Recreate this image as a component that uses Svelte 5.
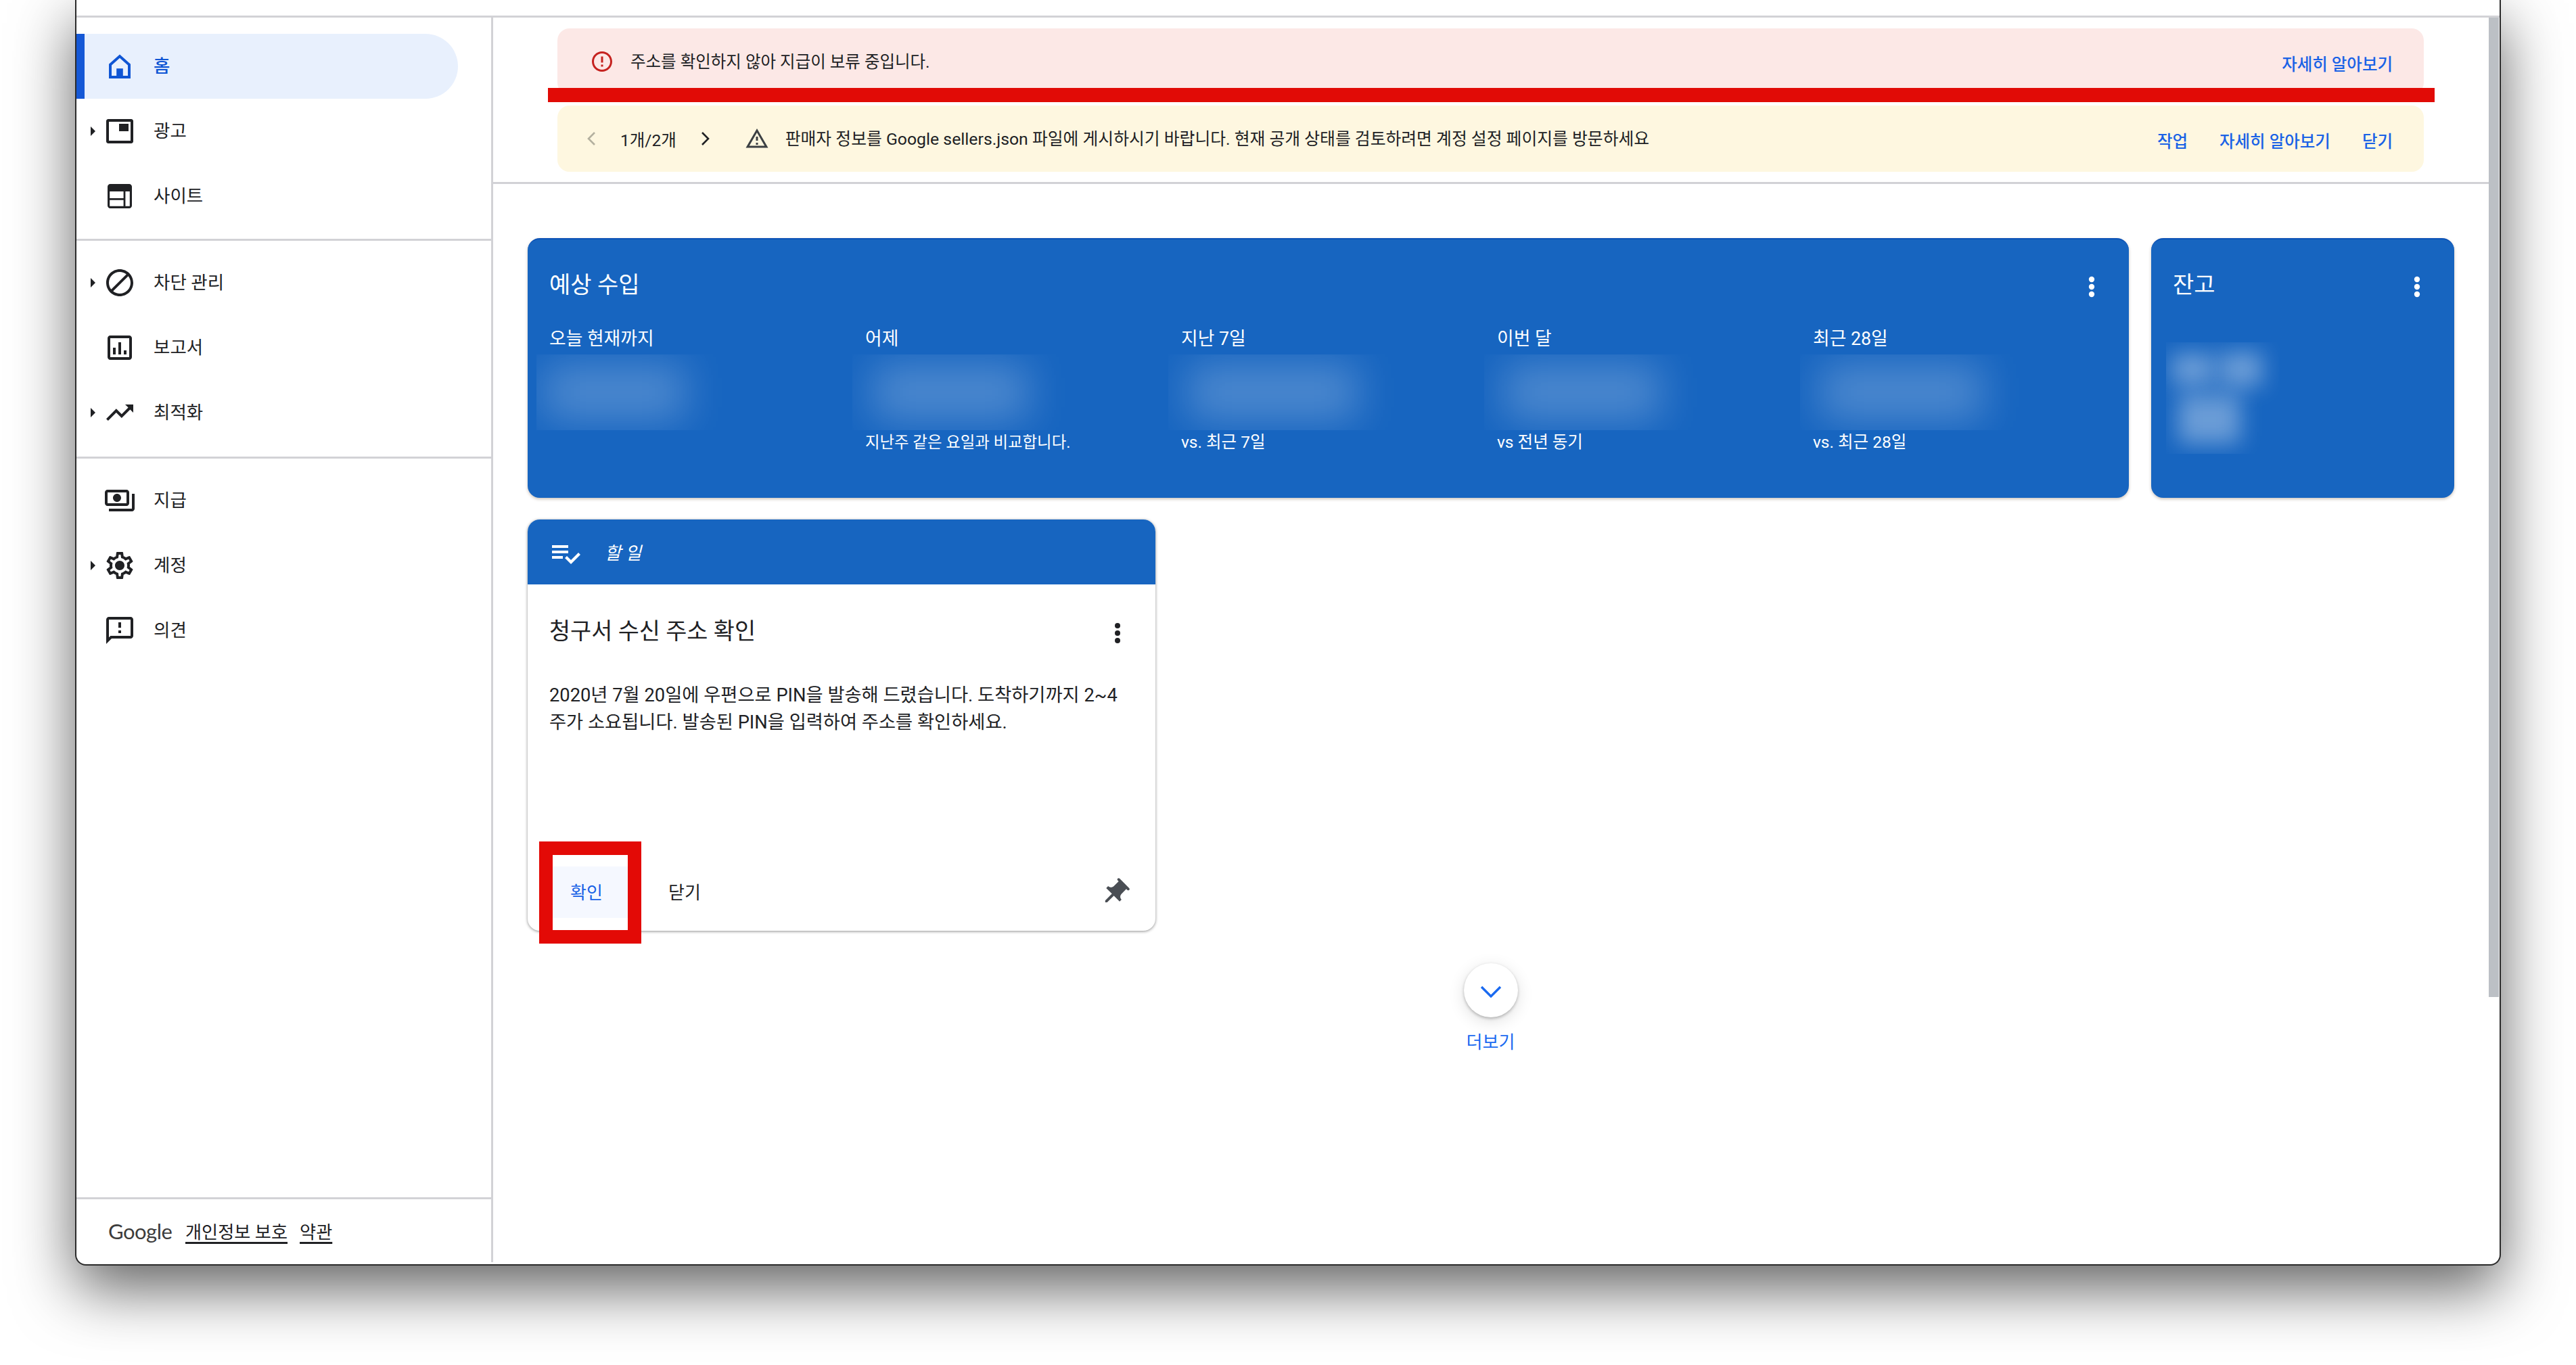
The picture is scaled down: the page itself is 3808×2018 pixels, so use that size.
<script>
  const groups = [
    [
      { label: '홈', active: true, d: 'home' },
      { label: '광고', caret: true, d: 'ads' },
      { label: '사이트', d: 'site' }
    ],
    [
      { label: '차단 관리', caret: true, d: 'block' },
      { label: '보고서', d: 'report' },
      { label: '최적화', caret: true, d: 'trend' }
    ],
    [
      { label: '지급', d: 'pay' },
      { label: '계정', caret: true, d: 'gear' },
      { label: '의견', d: 'feedback' }
    ]
  ];
  const paths = {
    home: 'M12 3.2 20 10.4V21H4V10.4L12 3.2ZM12 5.9 6 11.3V19H9.6V13.6H14.4V19H18V11.3L12 5.9Z',
    ads: 'M3.5 3H20.5C21.3 3 22 3.7 22 4.5V19.5C22 20.3 21.3 21 20.5 21H3.5C2.7 21 2 20.3 2 19.5V4.5C2 3.7 2.7 3 3.5 3ZM4 5V19H20V5H4ZM11.5 6.5H18.5V12H11.5V6.5Z',
    site: 'M5 3H19C20.1 3 21 3.9 21 5V19C21 20.1 20.1 21 19 21H5C3.9 21 3 20.1 3 19V5C3 3.9 3.9 3 5 3ZM4.6 8.5V13.5H14.8V8.5H4.6ZM16.2 8.5V19.4H19.4V8.5H16.2ZM4.6 14.9V19.4H14.8V14.9H4.6Z',
    block: 'M12 2C6.48 2 2 6.48 2 12s4.48 10 10 10 10-4.48 10-10S17.52 2 12 2zM4 12c0-4.42 3.58-8 8-8 1.85 0 3.55.63 4.9 1.69L5.69 16.9C4.63 15.55 4 13.85 4 12zm8 8c-1.85 0-3.55-.63-4.9-1.69L18.31 7.1C19.37 8.45 20 10.15 20 12c0 4.42-3.58 8-8 8z',
    report: 'M19 3H5c-1.1 0-2 .9-2 2v14c0 1.1.9 2 2 2h14c1.1 0 2-.9 2-2V5c0-1.1-.9-2-2-2zm0 16H5V5h14v14zM7 12h2v5H7zm4-4h2v9h-2zm4 6h2v3h-2z',
    trend: 'M16 6l2.29 2.29-4.88 4.88-4-4L2 16.59 3.41 18l6-6 4 4 6.3-6.29L22 12V6z',
    pay: 'M19 14V6c0-1.1-.9-2-2-2H3c-1.1 0-2 .9-2 2v8c0 1.1.9 2 2 2h14c1.1 0 2-.9 2-2zm-2 0H3V6h14v8zm-7-7c-1.66 0-3 1.34-3 3s1.34 3 3 3 3-1.34 3-3-1.34-3-3-3zm13 0v11c0 1.1-.9 2-2 2H4v-2h17V7h2z',
    gear: 'M19.43 12.98c.04-.32.07-.64.07-.98 0-.34-.03-.66-.07-.98l2.11-1.65c.19-.15.24-.42.12-.64l-2-3.46c-.09-.16-.26-.25-.44-.25-.06 0-.12.01-.17.03l-2.49 1c-.52-.4-1.08-.73-1.69-.98l-.38-2.65C14.46 2.18 14.25 2 14 2h-4c-.25 0-.46.18-.49.42l-.38 2.65c-.61.25-1.17.59-1.69.98l-2.49-1c-.06-.02-.12-.03-.18-.03-.17 0-.34.09-.43.25l-2 3.46c-.13.22-.07.49.12.64l2.11 1.65c-.04.32-.07.65-.07.98 0 .33.03.66.07.98l-2.11 1.65c-.19.15-.24.42-.12.64l2 3.46c.09.16.26.25.44.25.06 0 .12-.01.17-.03l2.49-1c.52.4 1.08.73 1.69.98l.38 2.65c.03.24.24.42.49.42h4c.25 0 .46-.18.49-.42l.38-2.65c.61-.25 1.17-.59 1.69-.98l2.49 1c.06.02.12.03.18.03.17 0 .34-.09.43-.25l2-3.46c.12-.22.07-.49-.12-.64l-2.11-1.65zm-1.98-1.71c.04.31.05.52.05.73 0 .21-.02.43-.05.73l-.14 1.13.89.7 1.08.84-.7 1.21-1.27-.51-1.04-.42-.9.68c-.43.32-.84.56-1.25.73l-1.06.43-.16 1.13-.2 1.35h-1.4l-.19-1.35-.16-1.13-1.06-.43c-.43-.18-.83-.41-1.23-.71l-.91-.7-1.06.43-1.27.51-.7-1.21 1.08-.84.89-.7-.14-1.13c-.03-.31-.05-.54-.05-.74s.02-.43.05-.73l.14-1.13-.89-.7-1.08-.84.7-1.21 1.27.51 1.04.42.9-.68c.43-.32.84-.56 1.25-.73l1.06-.43.16-1.13.2-1.35h1.39l.19 1.35.16 1.13 1.06.43c.43.18.83.41 1.23.71l.91.7 1.06-.43 1.27-.51.7 1.21-1.07.85-.89.7.14 1.13zM12 8.5c-1.93 0-3.5 1.57-3.5 3.5s1.57 3.5 3.5 3.5 3.5-1.57 3.5-3.5-1.57-3.5-3.5-3.5z',
    feedback: 'M20 2H4c-1.1 0-1.99.9-1.99 2L2 22l4-4h14c1.1 0 2-.9 2-2V4c0-1.1-.9-2-2-2zm0 14H5.17l-.59.59-.58.58V4h16v12zm-9-4h2v2h-2zm0-6h2v4h-2z'
  };
  const stats = [
    { label: '오늘 현재까지', sub: '', left: 10, width: 210 },
    { label: '어제', sub: '지난주 같은 요일과 비교합니다.', narrow: true, left: 30, width: 230 },
    { label: '지난 7일', sub: 'vs. 최근 7일', left: 30, width: 250 },
    { label: '이번 달', sub: 'vs 전년 동기', left: 30, width: 230 },
    { label: '최근 28일', sub: 'vs. 최근 28일', left: 30, width: 240 }
  ];
</script>

<div class="window">
  <div class="topbar"></div>
  <div class="body">
    <aside class="sidebar">
      <div class="nav">
        {#each groups as group, g}
          <div class="group" class:first={g === 0}>
            {#each group as item}
              <div class="item" class:active={item.active}>
                <span class="caret" class:shown={item.caret}></span>
                <svg class="nav-icon" viewBox="0 0 24 24" fill-rule={item.d === 'home' || item.d === 'ads' || item.d === 'site' ? 'evenodd' : 'nonzero'}><path d={paths[item.d]} /></svg>
                <span class="label">{item.label}</span>
              </div>
            {/each}
          </div>
        {/each}
      </div>
      <div class="foot">
        <span class="google">Google</span>
        <span class="foot-link">개인정보 보호</span>
        <span class="foot-link">약관</span>
      </div>
    </aside>

    <main class="main">
      <section class="banners">
        <div class="banner pink">
          <svg class="err" viewBox="0 0 24 24"><path d="M11 15h2v2h-2zm0-8h2v6h-2zm.99-5C6.47 2 2 6.48 2 12s4.47 10 9.99 10C17.52 22 22 17.52 22 12S17.52 2 11.99 2zM12 20c-4.42 0-8-3.58-8-8s3.58-8 8-8 8 3.58 8 8-3.58 8-8 8z" /></svg>
          <span class="msg">주소를 확인하지 않아 지급이 보류 중입니다.</span>
          <span class="links"><span class="link">자세히 알아보기</span></span>
        </div>
        <div class="banner yellow">
          <svg class="chev" viewBox="0 0 16 24"><path class="off" d="M13 3 4 12l9 9" /></svg>
          <span class="pager">1개/2개</span>
          <svg class="chev" viewBox="0 0 16 24"><path d="M3 3l9 9-9 9" /></svg>
          <svg class="warn" viewBox="0 0 24 24"><path d="M12 5.99L19.53 19H4.47L12 5.99M12 2L1 21h22L12 2zm1 14h-2v2h2v-2zm0-6h-2v4h2v-4z" /></svg>
          <span class="msg long">판매자 정보를 Google sellers.json 파일에 게시하시기 바랍니다. 현재 공개 상태를 검토하려면 계정 설정 페이지를 방문하세요</span>
          <span class="links">
            <span class="link">작업</span>
            <span class="link">자세히 알아보기</span>
            <span class="link">닫기</span>
          </span>
        </div>
        <div class="annot-bar"></div>
      </section>

      <section class="content">
        <div class="cards">
          <div class="card">
            <div class="card-head">
              <h2>예상 수입</h2>
              <svg class="kebab" viewBox="0 0 10 32"><circle cx="5" cy="5" r="4.2" /><circle cx="5" cy="16" r="4.2" /><circle cx="5" cy="27" r="4.2" /></svg>
            </div>
            <div class="stats">
              {#each stats as s}
                <div class="stat">
                  <div class="stat-label">{s.label}</div>
                  <div class="patch">
                    <div class="smear" style="left:{s.left}px;width:{s.width}px"></div>
                  </div>
                  <div class="stat-sub" class:narrow={s.narrow}>{s.sub}</div>
                </div>
              {/each}
            </div>
          </div>
          <div class="card">
            <div class="card-head">
              <h2>잔고</h2>
              <svg class="kebab" viewBox="0 0 10 32"><circle cx="5" cy="5" r="4.2" /><circle cx="5" cy="16" r="4.2" /><circle cx="5" cy="27" r="4.2" /></svg>
            </div>
            <div class="balance">
              <div class="lobe a"></div>
              <div class="lobe b"></div>
              <div class="lobe c"></div>
            </div>
          </div>
        </div>

        <div class="todo">
          <div class="todo-head">
            <svg class="list-icon" viewBox="0 0 24 24"><path d="M14 10H2v2h12v-2zm0-4H2v2h12V6zM2 16h8v-2H2v2zm19.5-4.5L23 13l-6.99 7-4.51-4.5L13 14l3.01 3 5.49-5.5z" /></svg>
            <em>할 일</em>
          </div>
          <div class="todo-body">
            <div class="todo-title">
              <h3>청구서 수신 주소 확인</h3>
              <svg class="kebab dark" viewBox="0 0 10 32"><circle cx="5" cy="5" r="4" /><circle cx="5" cy="16" r="4" /><circle cx="5" cy="27" r="4" /></svg>
            </div>
            <p>2020년 7월 20일에 우편으로 PIN을 발송해 드렸습니다. 도착하기까지 2~4<br />주가 소요됩니다. 발송된 PIN을 입력하여 주소를 확인하세요.</p>
            <div class="actions">
              <span class="confirm"><span class="act-text">확인</span><span class="annot-box"></span></span>
              <span class="close act-text">닫기</span>
              <svg class="pin" viewBox="0 0 24 24"><path d="M16 9V4h1c.55 0 1-.45 1-1s-.45-1-1-1H7c-.55 0-1 .45-1 1s.45 1 1 1h1v5c0 1.66-1.34 3-3 3v2h5.97v7l1 1 1-1v-7H19v-2c-1.66 0-3-1.34-3-3z" /></svg>
            </div>
          </div>
        </div>

        <div class="more">
          <div class="more-btn"><svg viewBox="0 0 32 18"><path d="M2 2l14 14L30 2" /></svg></div>
          <span>더보기</span>
        </div>
      </section>
    </main>

    <div class="scroll"><div class="thumb"></div></div>
  </div>
</div>

<style>
  :global(html) {
    overflow: hidden;
    background: #fff;
  }
  :global(body) {
    margin: 0;
    background: #fff;
    height: 100vh;
  }
  .window {
    --ink: #202124;
    --line: #d2d2d6;
    --link: #1a62e6;
    --card: #1765c0;
    box-sizing: border-box;
    width: 3586px;
    height: 1871px;
    margin-left: 111px;
    display: flex;
    flex-direction: column;
    background: #fff;
    border: solid #2a2a2a;
    border-width: 0 2px 2px;
    border-radius: 0 0 16px 16px;
    box-shadow: 0 34px 90px rgba(0, 0, 0, 0.62);
    font-family: Roboto, "Noto Sans CJK KR", sans-serif;
    font-size: 25px;
    color: var(--ink);
  }
  .topbar {
    flex: none;
    box-sizing: border-box;
    height: 26px;
    border-bottom: 3px solid var(--line);
  }
  .body {
    flex: 1;
    display: flex;
    min-height: 0;
  }
  .sidebar {
    box-sizing: border-box;
    flex: none;
    width: 616px;
    display: flex;
    flex-direction: column;
    border-right: 3px solid var(--line);
    margin-bottom: 3px;
  }
  .nav {
    flex: 1;
  }
  .group {
    padding: 14px 0 17px;
    border-bottom: 3px solid var(--line);
  }
  .group.first {
    padding: 24px 0 15px;
  }
  .group:last-child {
    border-bottom: none;
  }
  .item {
    height: 96px;
    display: flex;
    align-items: center;
    position: relative;
    width: 564px;
    box-sizing: border-box;
  }
  .item.active {
    background: #e8f0fd;
    border-radius: 0 48px 48px 0;
    color: #0f55d4;
    box-shadow: inset 12px 0 0 #1558d6;
  }
  .caret {
    flex: none;
    width: 0;
    height: 0;
    margin-left: 21px;
    margin-right: 12px;
    border: solid transparent;
    border-width: 7px 0 7px 7px;
  }
  .caret.shown {
    border-left-color: var(--ink);
  }
  .nav-icon {
    flex: none;
    width: 48px;
    height: 48px;
    fill: var(--ink);
  }
  .item.active .nav-icon {
    fill: #0f55d4;
  }
  .label {
    margin-left: 26px;
    line-height: 36px;
    font-size: 26.5px;
  }
  .item.active .label {
    font-weight: 500;
  }
  .foot {
    flex: none;
    box-sizing: border-box;
    height: 96px;
    border-top: 3px solid var(--line);
    display: flex;
    align-items: center;
    padding-left: 47px;
    gap: 18px;
    font-size: 26.2px;
  }
  .google {
    font-family: Lato, sans-serif;
    font-size: 31px;
    color: #3c3c3c;
    width: 93px;
    letter-spacing: -0.5px;
    margin-right: 3px;
  }
  .foot-link {
    text-decoration: underline;
    text-decoration-thickness: 3px;
    text-underline-offset: 5px;
  }
  .main {
    flex: 1;
    min-width: 0;
    display: flex;
    flex-direction: column;
  }
  .banners {
    position: relative;
    flex: none;
    box-sizing: border-box;
    height: 246px;
    padding: 16px 96px 0 95px;
    border-bottom: 3px solid var(--line);
    display: flex;
    flex-direction: column;
    gap: 16px;
  }
  .banner {
    box-sizing: border-box;
    height: 98px;
    border-radius: 18px;
    display: flex;
    align-items: center;
    font-size: 24.5px;
  }
  .pink {
    background: #fce8e6;
    padding: 0 46px 0 48px;
  }
  .yellow {
    background: #fef7e0;
    padding: 0 46px 0 42px;
  }
  .err {
    flex: none;
    width: 36px;
    height: 36px;
    fill: #c5221f;
    margin-right: 24px;
  }
  .chev {
    flex: none;
    width: 16px;
    height: 24px;
    fill: none;
    stroke: var(--ink);
    stroke-width: 2.6;
  }
  .chev .off {
    stroke: #b4b09f;
  }
  .pager {
    margin: 0 35px;
  }
  .warn {
    flex: none;
    width: 36px;
    height: 36px;
    margin: 0 24px 0 50px;
    fill: #3c4043;
  }
  .msg {
    margin-top: -4px;
  }
  .long {
    margin-top: -5px;
    font-size: 24.8px;
  }
  .links {
    margin-left: auto;
    display: flex;
    gap: 47px;
    color: var(--link);
    font-weight: 500;
    font-size: 24.5px;
    margin-top: 4px;
  }
  .annot-bar {
    position: absolute;
    left: 81px;
    right: 80px;
    top: 104px;
    height: 21px;
    background: #e10b06;
  }
  .content {
    padding: 80px 52px 0 51px;
    display: flex;
    flex-direction: column;
  }
  .cards {
    display: grid;
    grid-template-columns: 2367px 448px;
    gap: 33px;
  }
  .card {
    box-sizing: border-box;
    height: 384px;
    background: var(--card);
    border-top: 2px solid #0c52b6;
    border-radius: 18px;
    padding: 43px 50px 0 32px;
    color: #fff;
    box-shadow: 0 2px 4px rgba(90, 60, 30, 0.3);
  }
  .card-head {
    display: flex;
    justify-content: space-between;
    align-items: center;
  }
  h2 {
    margin: 0;
    font-size: 34px;
    font-weight: 400;
    line-height: 48px;
  }
  .kebab {
    width: 10px;
    height: 32px;
    fill: #fff;
    margin-top: 6px;
  }
  .kebab.dark {
    fill: var(--ink);
    margin-top: 4px;
  }
  .stats {
    display: grid;
    grid-template-columns: repeat(5, 467px);
    margin-top: 38px;
  }
  .stat-label {
    line-height: 36px;
    font-size: 26.8px;
  }
  .patch {
    position: relative;
    width: 360px;
    height: 112px;
    margin: 5px 0 0 -19px;
    overflow: hidden;
  }
  .smear {
    position: absolute;
    top: 14px;
    height: 84px;
    background: rgba(255, 255, 255, 0.23);
    filter: blur(30px);
  }
  .stat-sub {
    line-height: 36px;
    height: 36px;
    font-size: 24.5px;
  }
  .stat-sub.narrow {
    font-size: 23.4px;
  }
  .balance {
    position: relative;
    width: 168px;
    height: 165px;
    margin: 61px 0 0 -10px;
    overflow: hidden;
  }
  .lobe {
    position: absolute;
    background: rgba(255, 255, 255, 0.36);
    filter: blur(16px);
  }
  .lobe.a {
    left: 8px;
    top: 16px;
    width: 62px;
    height: 48px;
  }
  .lobe.b {
    left: 80px;
    top: 14px;
    width: 62px;
    height: 52px;
  }
  .lobe.c {
    left: 18px;
    top: 78px;
    width: 92px;
    height: 72px;
  }
  .todo {
    margin-top: 32px;
    width: 928px;
    height: 608px;
    display: flex;
    flex-direction: column;
    background: #fff;
    border-radius: 18px;
    box-shadow: 0 1px 4px rgba(0, 0, 0, 0.45);
  }
  .todo-head {
    flex: none;
    box-sizing: border-box;
    height: 96px;
    background: var(--card);
    border-radius: 18px 18px 0 0;
    display: flex;
    align-items: center;
    padding-left: 32px;
    color: #fff;
    font-size: 26px;
  }
  .list-icon {
    width: 48px;
    height: 48px;
    fill: #fff;
    margin-top: 4px;
  }
  em {
    margin-left: 34px;
    margin-top: -2px;
  }
  .todo-body {
    flex: 1;
    display: flex;
    flex-direction: column;
    padding: 0 32px;
    min-height: 0;
  }
  .todo-title {
    display: flex;
    justify-content: space-between;
    align-items: center;
    padding: 46px 19px 0 0;
  }
  h3 {
    margin: 0;
    font-size: 33.8px;
    font-weight: 400;
    line-height: 48px;
  }
  p {
    margin: 50px 0 0;
    font-size: 27.3px;
    line-height: 40px;
    white-space: nowrap;
  }
  .actions {
    margin-top: auto;
    margin-bottom: 19px;
    height: 76px;
    display: flex;
    align-items: center;
    margin-left: 5px;
  }
  .confirm {
    position: relative;
    box-sizing: border-box;
    height: 76px;
    width: 111px;
    padding-left: 26px;
    display: flex;
    align-items: center;
    background: #f5f8ff;
    color: var(--link);
  }
  .act-text {
    font-size: 26px;
    margin-top: -3px;
  }
  .annot-box {
    position: absolute;
    left: -20px;
    top: -37px;
    width: 111px;
    height: 111px;
    border: 20px solid #e30a06;
    box-sizing: content-box;
    pointer-events: none;
  }
  .close {
    margin-left: 60px;
  }
  .pin {
    margin-left: auto;
    width: 48px;
    height: 48px;
    fill: #4a4e54;
    transform: translate(7px, 1px) rotate(45deg);
    margin-right: 11px;
  }
  .more {
    margin-top: 48px;
    align-self: center;
    display: flex;
    flex-direction: column;
    align-items: center;
    color: #1a6af0;
    font-size: 26px;
  }
  .more-btn {
    width: 80px;
    height: 80px;
    border-radius: 50%;
    background: #fff;
    box-shadow: 0 2px 4px rgba(0, 0, 0, 0.25), 0 6px 24px rgba(0, 0, 0, 0.12);
    display: flex;
    align-items: center;
    justify-content: center;
  }
  .more-btn svg {
    width: 32px;
    height: 18px;
    fill: none;
    stroke: #1a6af0;
    stroke-width: 3.4;
    margin-top: 3px;
  }
  .more span {
    margin-top: 19px;
    line-height: 36px;
  }
  .scroll {
    flex: none;
    width: 16px;
  }
  .thumb {
    width: 15px;
    height: 1448px;
    background: #bcc0c5;
  }
</style>
